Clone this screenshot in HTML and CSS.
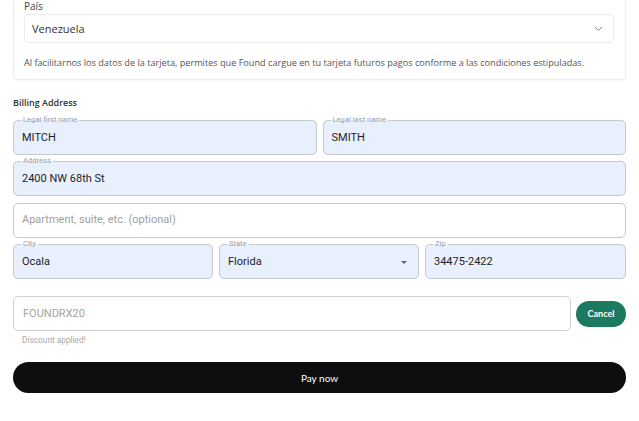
FILE: index.html
```html
<!DOCTYPE html>
<html lang="es">
<head>
<meta charset="utf-8">
<title>Checkout</title>
<link rel="stylesheet" href="styles.css">
</head>
<body>
<div class="page">
  <section class="card">
    <div class="card-label">País</div>
    <div class="select">
      <span>Venezuela</span>
      <svg class="chev" width="9" height="6" viewBox="0 0 9 6"><path d="M1 1 L4.5 4.5 L8 1" fill="none" stroke="#8a8a8a" stroke-width="1"/></svg>
    </div>
    <p class="note">Al facilitarnos los datos de la tarjeta, permites que Found cargue en tu tarjeta futuros pagos conforme a las condiciones estipuladas.</p>
  </section>

  <h2 class="section-title">Billing Address</h2>

  <div class="fields">
    <div class="row">
      <fieldset class="field filled"><legend>Legal first name</legend><div class="value">MITCH</div></fieldset>
      <fieldset class="field filled"><legend>Legal last name</legend><div class="value">SMITH</div></fieldset>
    </div>
    <fieldset class="field filled"><legend>Address</legend><div class="value">2400 NW 68th St</div></fieldset>
    <fieldset class="field plain"><div class="value placeholder">Apartment, suite, etc. (optional)</div></fieldset>
    <div class="row three">
      <fieldset class="field filled"><legend>City</legend><div class="value">Ocala</div></fieldset>
      <fieldset class="field filled"><legend>State</legend><div class="value with-arrow"><span>Florida</span><span class="arrow"></span></div></fieldset>
      <fieldset class="field filled"><legend>Zip</legend><div class="value">34475-2422</div></fieldset>
    </div>
  </div>

  <div class="promo">
    <div class="promo-input">FOUNDRX20</div>
    <button class="cancel">Cancel</button>
  </div>
  <div class="helper">Discount applied!</div>

  <button class="pay">Pay now</button>
</div>
</body>
</html>
```

FILE: styles.css
```css
* { box-sizing: border-box; }
html, body { margin: 0; padding: 0; background: #fff; }
body { font-family: Roboto, "Noto Sans", Arial, sans-serif; color: #222; }

.page { padding: 0 13px; width: 639px; }

.card {
  border: 1px solid #ececec;
  border-top: none;
  border-radius: 0 0 4px 4px;
  box-shadow: 0 1px 2px rgba(0,0,0,0.04);
  padding: 0 11px 9px 10px;
  font-family: "Open Sans", "Noto Sans", sans-serif;
}
.card-label { font-size: 10px; line-height: 12px; color: #444; }
.select {
  margin-top: 2px;
  height: 29px;
  border: 1px solid #ececec;
  border-radius: 4px;
  display: flex;
  align-items: center;
  justify-content: space-between;
  padding: 0 10px 0 7px;
  font-size: 11px;
  color: #333;
}
.chev { display: block; }
.note { margin: 13px 0 0; font-size: 9.15px; line-height: 14px; color: #555; white-space: nowrap; }

.section-title {
  margin: 17px 0 0;
  font-size: 9px;
  line-height: 12px;
  font-weight: 600;
  color: #333;
  font-family: "Open Sans", "Noto Sans", sans-serif;
}

.fields { margin-top: 7px; display: flex; flex-direction: column; gap: 2px; }
.row { display: grid; grid-template-columns: 1fr 1fr; gap: 6px; }
.row.three { grid-template-columns: 200px 200px 1fr; }

.field {
  margin: 0;
  min-width: 0;
  border: 1px solid #c6c8cc;
  border-radius: 5px;
  padding: 0 9px 0 7px;
}
.field.filled { background: #e8f0fe; }
.field.plain { background: #fff; margin-top: 5px; }
.field legend {
  font-size: 7.6px;
  line-height: 8px;
  color: #a0a0a0;
  padding: 0 2px;
}
.value {
  font-size: 11px;
  line-height: 14px;
  padding: 7px 0 9px 1px;
  color: #1e1e1e;
}
.plain .value { padding: 9px 0 10px 1px; }
.placeholder { color: #a0a0a0; }
.with-arrow { display: flex; justify-content: space-between; align-items: center; }
.arrow {
  width: 0; height: 0;
  border-left: 3.5px solid transparent;
  border-right: 3.5px solid transparent;
  border-top: 3.5px solid #666;
  margin-right: 2px;
}

.promo { margin-top: 17px; display: flex; align-items: center; gap: 5px; }
.promo-input {
  flex: 1;
  height: 35px;
  border: 1px solid #d2d2d2;
  border-radius: 5px;
  padding: 0 9px;
  display: flex;
  align-items: center;
  font-size: 11px;
  color: #a3a3a3;
}
.cancel {
  width: 50px;
  height: 26px;
  border: none;
  border-radius: 13px;
  background: #1b7a5f;
  color: #fff;
  font-family: Lato, "Noto Sans", sans-serif;
  font-weight: 700;
  font-size: 9px;
  padding: 0;
}
.helper {
  margin-top: 4px;
  padding-left: 9px;
  font-size: 8.3px;
  line-height: 10px;
  color: #a8a8a8;
  font-family: Roboto, sans-serif;
}
.pay {
  display: block;
  margin-top: 17px;
  width: 100%;
  height: 31px;
  border: none;
  border-radius: 16px;
  background: #0e0e0e;
  color: #fff;
  font-family: Lato, "Noto Sans", sans-serif;
  font-size: 10px;
  font-weight: 400;
}
```
